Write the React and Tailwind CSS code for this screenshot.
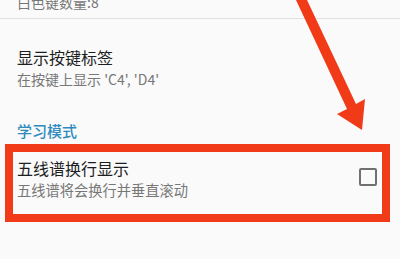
import React from "react";

export default function App() {
  return (
    <div
      className="relative w-[400px] h-[259px] overflow-hidden bg-[#fafafa]"
      style={{ fontFamily: '"Noto Sans CJK SC", "Noto Sans", sans-serif' }}
    >
      <div className="border-b border-[#e2e2e2] pl-[17px] h-[27px]">
        <div className="-mt-[8px] text-[14px] leading-[20px] text-[#777]">白色键数量:8</div>
      </div>

      <div className="pl-[17px] pt-[27px]">
        <div className="text-[16px] leading-[22px] text-[#1e1e1e]">显示按键标签</div>
        <div className="mt-[1px] text-[14px] leading-[20px] text-[#777]">在按键上显示 'C4', 'D4'</div>
      </div>

      <div className="pl-[17px] mt-[32px] text-[15px] leading-[20px] font-medium text-[#2f8bbd]">学习模式</div>

      <div className="mt-[3px] ml-[5px] w-[385px] h-[78px] border-[8px] border-[#f03a18] flex items-start pl-[4px] pr-[5px]">
        <div className="flex-1 pt-[6px]">
          <div className="text-[16px] leading-[20px] text-[#1e1e1e]">五线谱换行显示</div>
          <div className="mt-[2px] text-[14.25px] leading-[20px] text-[#777]">五线谱将会换行并垂直滚动</div>
        </div>
        <div className="mt-[16px] w-[18px] h-[18px] border-2 border-[#707070] rounded-[2px]" />
      </div>

      <svg className="absolute left-0 top-0" width="400" height="259" viewBox="0 0 400 259">
        <polygon
          points="296,0 307,0 356,104 365,99 362,130 337,114 347,109"
          fill="#f03a18"
        />
      </svg>
    </div>
  );
}
